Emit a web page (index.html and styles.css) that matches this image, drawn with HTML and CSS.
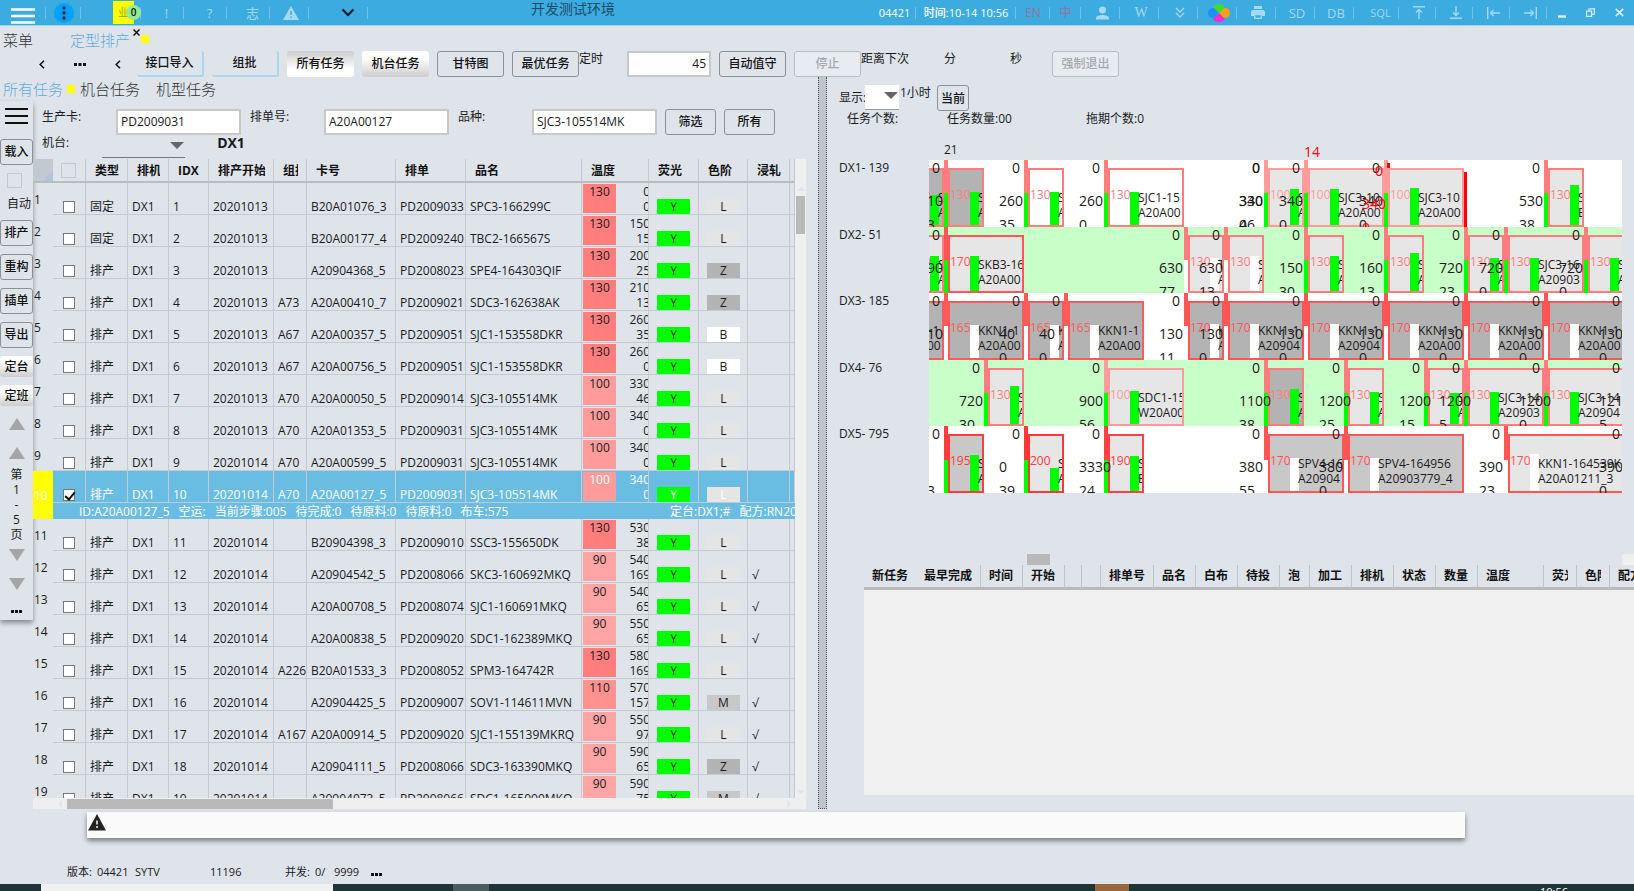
FILE: index.html
```html
<!DOCTYPE html>
<html lang="zh">
<head>
  <meta charset="utf-8">
  <meta name="viewport" content="width=device-width, initial-scale=1.0">
  <title>定型排产</title>
  <link rel="stylesheet" href="styles.css">
</head>
<body>
  <header class="topbar">
    <button class="top-item w-menu" aria-label="菜单"><svg width="24" height="18" viewBox="0 0 24 18"><path d="M0 2.5h24M0 9h24M0 15.5h24" stroke="#fff" stroke-width="2.4"/></svg></button>
    <button class="top-item w-dots" aria-label="更多"><span class="dots-circle"><svg width="20" height="20" viewBox="0 0 20 20"><g fill="#0b2a3c"><circle cx="10" cy="5" r="1.7"/><circle cx="10" cy="10" r="1.7"/><circle cx="10" cy="15" r="1.7"/></g></svg></span></button>
    <a class="top-item w-biz" href="#biz"><span class="biz">业<span class="badge">0</span></span></a>
    <button class="top-item w-43 faint shift">!</button>
    <button class="top-item w-43 faint shift">?</button>
    <button class="top-item w-43 faint shift">志</button>
    <button class="top-item w-39 faint" aria-label="警告"><svg width="16" height="14" viewBox="0 0 16 14"><path d="M8 0l8 14H0z" fill="currentColor"/><path d="M8 5v4M8 10.5v1.5" stroke="#3cabdf" stroke-width="1.5"/></svg></button>
    <button class="top-item w-59" aria-label="展开"><svg width="14" height="9" viewBox="0 0 14 9"><path d="M1.5 1.5L7 7l5.500-5.500" fill="none" stroke="#0b1c26" stroke-width="2.2"/></svg></button>
    <div class="top-title">开发测试环境</div>
    <span class="top-item w-43 white">04421</span>
    <span class="top-item w-100 white">时间:10-14 10:56</span>
    <button class="top-item w-34 lang">EN</button>
    <button class="top-item w-30 lang">中</button>
    <button class="top-item w-39 faint" aria-label="用户"><svg width="13" height="14" viewBox="0 0 13 14"><circle cx="6.500" cy="4" r="3.500" fill="currentColor"/><path d="M0 13.500v-2Q1 9 6.500 9T13 11.500v2z" fill="currentColor"/></svg></button>
    <button class="top-item w-39 faint serif">W</button>
    <button class="top-item w-39 faint" aria-label="收起"><svg width="10" height="12" viewBox="0 0 10 12"><path d="M1 1l4 4 4-4M1 6l4 4 4-4" fill="none" stroke="currentColor" stroke-width="1.400"/></svg></button>
    <button class="top-item w-39" aria-label="颜色"><svg width="22" height="18" viewBox="0 0 22 18"><ellipse cx="5" cy="9" rx="5" ry="5" fill="#1e90ff"/><ellipse cx="17" cy="9" rx="5" ry="5" fill="#f7a01c"/><path d="M11 9L5 3Q7 0 11 0t6 3z" fill="#3fdc2c"/><path d="M11 9l-6 6q2 3 6 3t6-3z" fill="#f32bd0"/></svg></button>
    <button class="top-item w-39 faint" aria-label="打印"><svg width="14" height="13" viewBox="0 0 14 13"><path d="M3 0h8v3H3zM1.500 4h11L14 5.500V10h-3V8H3v2H0V5.500z" fill="currentColor"/><path d="M3.700 8.500h6.600v3.800H3.700z" fill="none" stroke="currentColor" stroke-width="1.300"/></svg></button>
    <button class="top-item w-39 faint">SD</button>
    <button class="top-item w-39 faint">DB</button>
    <button class="top-item w-45 faint small">SQL</button>
    <button class="top-item w-37 faint" aria-label="置顶"><svg width="12" height="13" viewBox="0 0 12 13"><path d="M0 .7h12M6 13V3.500M3 6.500l3-3 3 3" fill="none" stroke="currentColor" stroke-width="1.400"/></svg></button>
    <button class="top-item w-37 faint" aria-label="置底"><svg width="12" height="13" viewBox="0 0 12 13"><path d="M0 12.300h12M6 0v9.500M3 6.500l3 3 3-3" fill="none" stroke="currentColor" stroke-width="1.400"/></svg></button>
    <button class="top-item w-37 faint" aria-label="靠左"><svg width="13" height="12" viewBox="0 0 13 12"><path d="M.7 0v12M13 6H3.500M6.500 3l-3 3 3 3" fill="none" stroke="currentColor" stroke-width="1.400"/></svg></button>
    <button class="top-item w-37 faint" aria-label="靠右"><svg width="13" height="12" viewBox="0 0 13 12"><path d="M12.300 0v12M0 6h9.500M6.500 3l3 3-3 3" fill="none" stroke="currentColor" stroke-width="1.400"/></svg></button>
    <button class="top-item win" aria-label="最小化"><svg width="8" height="10" viewBox="0 0 8 10"><path d="M0 8.500h8" stroke="#d8f1fd" stroke-width="2.500"/></svg></button>
    <button class="top-item win" aria-label="还原"><svg width="9" height="9" viewBox="0 0 9 9"><path d="M.6 3.100h5v5.300h-5zM3 3V.8h5.400v5.300H6" fill="none" stroke="#d8f1fd" stroke-width="1.200"/></svg></button>
    <button class="top-item win" aria-label="关闭"><svg width="9" height="9" viewBox="0 0 9 9"><path d="M.8.8l7.400 7.400M8.200.8L.8 8.200" stroke="#d8f1fd" stroke-width="1.800"/></svg></button>
  </header>

  <nav class="page-tabs">
    <a class="tab" href="#menu">菜单</a>
    <a class="tab active" href="#plan">定型排产</a>
    <button class="tab-close" aria-label="关闭标签"><svg width="7" height="7" viewBox="0 0 7 7"><path d="M.5.5l6 6M6.500.5l-6 6" stroke="#111" stroke-width="1.500"/></svg></button>
    <span class="dot"></span>
  </nav>

  <div class="toolbar">
    <button class="nav-btn" aria-label="上一页"><svg width="6" height="9" viewBox="0 0 6 9"><path d="M5 .8L1.200 4.500 5 8.200" fill="none" stroke="#111" stroke-width="1.500"/></svg></button>
    <button class="nav-btn" aria-label="更多"><svg width="12" height="3" viewBox="0 0 12 3"><path d="M0 0h3v3H0zM4.500 0h3v3h-3zM9 0h3v3H9z" fill="#111"/></svg></button>
    <button class="nav-btn" aria-label="上一个"><svg width="6" height="9" viewBox="0 0 6 9"><path d="M5 .8L1.200 4.500 5 8.200" fill="none" stroke="#111" stroke-width="1.500"/></svg></button>
    <div class="btn-group">
      <button class="btn blue-edge">接口导入</button>
      <button class="btn blue-edge">组批</button>
      <button class="btn pressed">所有任务</button>
      <button class="btn raised">机台任务</button>
      <button class="btn">甘特图</button>
      <button class="btn">最优任务</button>
    </div>
    <label class="timer-label" for="timer">定时</label>
    <div class="btn-group">
      <input class="text-box timer" id="timer" value="45">
      <button class="btn">自动值守</button>
      <button class="btn" disabled>停止</button>
    </div>
    <span class="next-label">距离下次</span>
    <span class="minute-label">分</span>
    <span class="second-label">秒</span>
    <button class="btn" disabled>强制退出</button>
  </div>

  <main class="workspace">
    <section class="left-pane">
      <nav class="sub-tabs">
        <a class="tab active" href="#all">所有任务</a>
        <span class="dot"></span>
        <a class="tab" href="#machine">机台任务</a>
        <a class="tab tab-last" href="#model">机型任务</a>
      </nav>
      <div class="left-body">
        <aside class="sidebar">
          <button class="side-menu" aria-label="菜单"><svg width="23" height="16" viewBox="0 0 23 16"><path d="M0 1h23M0 8h23M0 15h23" stroke="#111" stroke-width="2"/></svg></button>
          <button class="btn side-btn">载入</button>
          <label class="auto"><input type="checkbox" class="big-check">自动</label>
          <div class="side-group">
            <button class="btn side-btn">排产</button>
            <button class="btn side-btn">重构</button>
            <button class="btn side-btn">插单</button>
            <button class="btn side-btn">导出</button>
            <button class="btn side-btn flat raised">定台</button>
            <button class="btn side-btn flat raised">定班</button>
          </div>
          <button class="arrow up" aria-label="首页"></button>
          <button class="arrow up" aria-label="上一页"></button>
          <div class="pager"><span>第</span><span>1</span><span>-</span><span>5</span><span>页</span></div>
          <button class="arrow down" aria-label="下一页"></button>
          <button class="arrow down" aria-label="末页"></button>
          <button class="side-more" aria-label="更多"><svg width="11" height="3" viewBox="0 0 11 3"><path d="M0 0h3v3H0zM4 0h3v3H4zM8 0h3v3H8z" fill="#111"/></svg></button>
        </aside>
        <div class="list-area">
          <div class="filters">
            <label class="filter-label" for="card">生产卡:</label>
            <input class="text-box" id="card" value="PD2009031">
            <label class="filter-label" for="order">排单号:</label>
            <input class="text-box" id="order" value="A20A00127">
            <label class="filter-label" for="kind">品种:</label>
            <input class="text-box" id="kind" value="SJC3-105514MK">
            <button class="btn narrow">筛选</button>
            <button class="btn narrow">所有</button>
          </div>
          <div class="machine-row">
            <label for="machine">机台:</label>
            <span class="drop line"><select id="machine"><option></option></select></span>
            <b class="machine-name">DX1</b>
          </div>
          <div class="grid-box">
            <div class="grid-main">
              <div class="grid-clip">
                <table class="tasks">
                  <colgroup>
                    <col class="c-num"><col class="c-33"><col class="c-42"><col class="c-41"><col class="c-40"><col class="c-65"><col class="c-33"><col class="c-89"><col class="c-70"><col class="c-116"><col class="c-67"><col class="c-50"><col class="c-49"><col class="c-42"><col class="c-end">
                  </colgroup>
                  <thead>
                    <tr>
                      <th class="corner"></th>
                      <th class="check-cell"><input type="checkbox" class="big-check" aria-label="全选"></th>
                      <th><span>类型</span></th><th><span>排机</span></th><th><span>IDX</span></th><th><span>排产开始</span></th><th><span>组批</span></th><th><span>卡号</span></th><th><span>排单</span></th><th><span>品名</span></th><th><span>温度</span></th><th><span>荧光</span></th><th><span>色阶</span></th><th><span>浸轧</span></th><th></th>
                    </tr>
                  </thead>
                  <tbody id="tasks"></tbody>
                </table>
              </div>
              <div class="vscroll"><i class="v-up"></i><i class="v-thumb"></i><i class="v-down"></i></div>
            </div>
            <div class="hscroll"><i class="h-left"></i><i class="h-thumb"></i><i class="h-right"></i></div>
          </div>
        </div>
      </div>
    </section>

    <div class="splitter"></div>

    <section class="right-pane">
      <div class="show-row">
        <label for="span">显示:</label>
        <span class="drop white-drop"><select id="span"><option></option></select></span>
        <span class="hour">1小时</span>
        <button class="btn now">当前</button>
      </div>
      <div class="counts"><span>任务个数:</span><span>任务数量:00</span><span>拖期个数:0</span></div>
      <div class="gantt">
        <div class="gantt-head" id="hours"></div>
        <div class="gantt-labels"><span>DX1- 139</span><span>DX2- 51</span><span>DX3- 185</span><span>DX4- 76</span><span>DX5- 795</span></div>
        <div class="gantt-rows" id="gantt"></div>
      </div>
      <div class="gantt-scroll"><i class="h-left"></i><i class="g-thumb"></i><i class="h-right"></i><i class="g-corner"></i></div>
      <div class="new-tasks">
        <table class="queue">
          <colgroup>
            <col class="q-52"><col class="q-65"><col class="q-42"><col class="q-42"><col class="q-17"><col class="q-19"><col class="q-53"><col class="q-42"><col class="q-42"><col class="q-42"><col class="q-30"><col class="q-42"><col class="q-42"><col class="q-42"><col class="q-42"><col class="q-66"><col class="q-33"><col class="q-33"><col class="q-42">
          </colgroup>
          <thead>
            <tr>
              <th class="no-line"><span>新任务</span></th><th><span>最早完成</span></th><th><span>时间</span></th><th><span>开始</span></th><th></th><th></th><th><span>排单号</span></th><th><span>品名</span></th><th><span>白布</span></th><th><span>待投</span></th><th><span>泡</span></th><th><span>加工</span></th><th><span>排机</span></th><th><span>状态</span></th><th><span>数量</span></th><th><span>温度</span></th><th><span>荧光</span></th><th><span>色阶</span></th><th><span>配方</span></th>
            </tr>
          </thead>
        </table>
      </div>
    </section>
  </main>

  <div class="message-bar"><svg width="18" height="17" viewBox="0 0 18 17"><path d="M9 0l9 16.500H0z" fill="#222"/><path d="M9 6.500v4M9 12v2" stroke="#fafafa" stroke-width="1.500"/></svg></div>

  <footer class="status">
    <span class="s-ver">版本:</span><span class="s-no">04421</span><span class="s-user">SYTV</span><span class="s-port">11196</span><span class="s-par">并发:</span><span class="s-cur">0/</span><span class="s-max">9999</span>
    <svg width="11" height="3" viewBox="0 0 11 3"><path d="M0 0h3v3H0zM4 0h3v3H4zM8 0h3v3H8z" fill="#111"/></svg>
  </footer>
  <div class="taskbar"><i class="t-search"></i><i class="t-app"></i><i class="t-orange"></i><span class="t-clock">10:56</span></div>

  <script src="app.js"></script>
</body>
</html>
```
FILE: styles.css
```css
* { box-sizing: border-box; }

body {
  margin: 0;
  height: 100vh;
  overflow: hidden;
  display: flex;
  flex-direction: column;
  background: #dfe4eb;
  color: #1a1a1a;
  font: 12px/16px "Open Sans", "Noto Sans CJK SC", sans-serif;
}

button, input, select { font: inherit; color: inherit; }
button { padding: 0; border: 0; background: none; white-space: nowrap; }
a { color: inherit; text-decoration: none; }
i { display: block; }
svg { display: block; }

/* top bar */
.topbar {
  flex: none;
  height: 25px;
  display: flex;
  background: #3cabdf;
  box-shadow: 0 1px 0 #9fd4ee;
}
.top-item {
  flex: none;
  display: flex;
  align-items: center;
  justify-content: center;
  background: linear-gradient(#6fc1e8, #6fc1e8) right 7px / 1px 12px no-repeat;
  white-space: nowrap;
}
.top-item.win { background: none; width: 29px; }
.faint { color: #a5d9f2; font-size: 13px; }
.faint.small { font-size: 11px; }
.faint.serif { font-family: "Liberation Serif", serif; font-size: 14px; }
.white { color: #fff; font-size: 11px; font-weight: 500; }
.lang { color: #9a6f9c; }
.w-menu { width: 46px; padding-top: 6px; }
.w-dots { width: 35px; }
.w-biz { width: 60px; }
.w-43 { width: 43px; }
.w-39 { width: 39px; padding-left: 3px; }
.w-59 { width: 59px; padding-left: 18px; }
.w-100 { width: 100px; }
.w-34 { width: 34px; }
.w-30 { width: 31px; }
.w-45 { width: 45px; padding-left: 8px; }
.w-37 { width: 37px; padding-left: 3px; }
.shift { padding-left: 8px; }
.dots-circle { background: #00a2ff; border-radius: 50%; }
.biz {
  position: relative;
  width: 21px;
  height: 23px;
  margin-left: 32px;
  margin-right: 7px;
  padding-left: 5px;
  background: #ff0;
  color: #a0a800;
  font-size: 11px;
  line-height: 23px;
}
.badge {
  position: absolute;
  left: 13px;
  top: 4px;
  width: 15px;
  height: 15px;
  border-radius: 50%;
  background: #90ee90;
  color: #111;
  font-size: 10px;
  font-weight: 600;
  line-height: 15px;
  text-align: center;
}
.top-title {
  flex: 1;
  padding-left: 163px;
  font-size: 14px;
  line-height: 18px;
  color: #1c4d66;
}

/* tabs */
.page-tabs, .sub-tabs {
  flex: none;
  display: flex;
  align-items: center;
  padding-left: 3px;
}
.page-tabs { height: 26px; padding-top: 4px; }
.sub-tabs { height: 24px; }
.tab { font-size: 15px; line-height: 20px; font-weight: 300; color: #333; }
.tab.active { color: #5fabdc; }
.page-tabs .active { margin-left: 37px; }
.tab-close { align-self: flex-start; margin-left: 3px; }
.dot { width: 8px; height: 8px; background: #ff0; }
.page-tabs .dot { margin: 0 0 2px 1px; }
.sub-tabs .dot { margin: 0 5px 0 4px; }
.tab-last { margin-left: 16px; }

/* buttons and boxes */
.toolbar {
  flex: none;
  height: 26px;
  display: flex;
  align-items: flex-start;
  padding-left: 23px;
}
.nav-btn { width: 38px; height: 26px; display: flex; align-items: center; justify-content: center; }
.btn-group { display: flex; gap: 8px; }
.btn {
  width: 67px;
  height: 26px;
  border: 1px solid #8d9196;
  border-radius: 3px;
  color: #111;
  font-weight: 500;
  text-align: center;
}
.btn:disabled { background: #e8ecf0; border-color: #b9bdc2; color: #a5a8ac; }
.btn.blue-edge { border: 0; border-right: 2px solid #a9d6ea; border-bottom: 2px solid #a9d6ea; }
.btn.pressed { border: 0; background: linear-gradient(#cdcdcd, #fff 70%); }
.btn.raised { border: 0; background: linear-gradient(#fff, #fafafa 35%, #cdcdcd); }
.btn.narrow { width: 51px; margin-left: 8px; }
.text-box {
  width: 125px;
  height: 26px;
  padding: 0 3px 2px;
  border: 2px solid #c8c8c8;
  border-radius: 0;
  background: #fff;
  outline: 0;
}
.text-box.timer { width: 84px; text-align: right; }
.timer-label { width: 48px; }
.next-label { width: 83px; }
.minute-label { width: 66px; }
.second-label { width: 42px; }

.big-check, .row-check {
  appearance: none;
  margin: 0;
  width: 15px;
  height: 15px;
  border: 1px solid #c5c9ce;
  display: block;
}
.row-check { position: relative; width: 12px; height: 12px; border-color: #777; background: #fff; margin: 0 auto; }
.row-check:checked::after {
  content: "";
  position: absolute;
  left: 3px;
  top: 0;
  width: 4px;
  height: 8px;
  border: solid #111;
  border-width: 0 2px 2px 0;
  transform: rotate(40deg);
}

.drop { position: relative; display: block; }
.drop::after {
  content: "";
  position: absolute;
  right: 1px;
  top: 7px;
  border: 7px solid transparent;
  border-top-color: #666;
  border-bottom: 0;
  pointer-events: none;
}
.drop select { appearance: none; width: 100%; height: 100%; border: 0; background: none; display: block; }
.drop.line { width: 83px; height: 23px; margin-left: 33px; border-bottom: 1px solid #777; }
.white-drop { width: 34px; height: 25px; background: #fff; border-bottom: 1px solid #999; }

/* panes */
.workspace {
  flex: 1;
  min-height: 0;
  display: grid;
  grid-template-columns: minmax(0, 818fr) 9px minmax(0, 807fr);
}
.left-pane, .right-pane { min-height: 0; display: flex; flex-direction: column; }
.splitter {
  background: #c0c6c9;
  border: 1px dotted #555;
  border-top: 0;
}
.left-body { flex: 1; min-height: 0; display: flex; }

.sidebar {
  flex: none;
  width: 33px;
  align-self: flex-start;
  display: flex;
  flex-direction: column;
  align-items: center;
  padding: 7px 0;
  box-shadow: 0 3px 5px rgba(0, 0, 0, .4);
}
.side-menu { margin-bottom: 15px; }
.side-btn { width: 33px; }
.side-btn.flat { height: 21px; }
.auto { display: flex; flex-direction: column; gap: 8px; padding: 8px 0 8px 5px; }
.side-group { display: flex; flex-direction: column; gap: 8px; margin-bottom: 12px; }
.arrow { border: 8px solid transparent; width: 0; height: 0; }
.arrow.up { border-bottom: 12px solid #a5a5a5; border-top: 0; margin-bottom: 17px; }
.arrow.down { border-top: 12px solid #a5a5a5; border-bottom: 0; margin-top: 17px; }
.pager { display: flex; flex-direction: column; align-items: center; margin: -9px 0 -10px; line-height: 15px; }
.side-more { margin-top: 20px; }

.list-area { flex: 1; min-width: 0; display: flex; flex-direction: column; padding-right: 12px; }
.filters { flex: none; display: flex; padding: 8px 0 0 9px; }
.filter-label { width: 83px; }
.text-box + .filter-label { padding-left: 9px; }
.filters .filter-label:first-child { width: 74px; }
.machine-row { flex: none; height: 24px; display: flex; padding-left: 9px; }
.machine-name { margin-left: 32px; font-size: 14px; }

/* task list */
.grid-box { flex: 1; min-height: 0; display: flex; flex-direction: column; }
.grid-main { flex: 1; min-height: 0; display: flex; }
.grid-clip { flex: 1; min-width: 0; overflow: hidden; }
table { table-layout: fixed; border-spacing: 0; border-collapse: separate; width: 0; }
.tasks th, .tasks td { padding: 0; overflow: hidden; text-align: left; white-space: nowrap; border-right: 1px solid #c5cad2; }
.tasks thead th { height: 24px; padding: 1px 8px 0 9px; border-bottom: 2px solid #b9bbbd; color: #111; }
.tasks th > span, .queue th > span { display: block; overflow: hidden; }
.tasks thead .corner { background: linear-gradient(135deg, #c3c9d1 75%, #b4c3d6 75%); border-right: 0; }
.tasks thead .check-cell { padding: 0 0 0 8px; vertical-align: middle; }
.tasks td { height: 32px; padding: 0 0 0 4px; vertical-align: bottom; border-bottom: 1px solid #c5cad2; line-height: 14px; }
.tasks tbody th { font-weight: 400; padding: 2px 0 0 1px; border: 0; }
.tasks .check-cell { vertical-align: bottom; padding: 0 0 1px; }
.tasks .temp-cell { padding: 0 0 0 1px; }
.temp-wrap { display: flex; line-height: 15px; overflow: hidden; }
.temp { flex: none; width: 33px; height: 29px; text-align: center; }
.amounts { flex: none; width: 34px; height: 30px; text-align: right; }
.amounts span { display: block; }
.tasks td.tag-cell { padding: 0 0 0 8px; }
.tag { display: block; width: 33px; height: 15px; line-height: 15px; text-align: center; background: #e5e5e5; }
.tag.Y { background: #0f0; }
.tag.Z { background: #b3b3b3; }
.tag.M { background: #c8c8c8; }
.tag.B { background: #fff; }
.tasks .selected td { background: #69bde3; color: #fff; }
.tasks .selected th { background: #ff0; color: #fff; }
.tasks td.detail { height: 16px; padding-left: 26px; line-height: 15px; border: 0; }
.detail-wrap { display: flex; }
.detail-main { flex: none; width: 591px; display: flex; gap: 9px; }
.detail-more { display: flex; gap: 9px; }

.c-num { width: 20px; } .c-33 { width: 33px; } .c-42 { width: 42px; } .c-41 { width: 41px; }
.c-40 { width: 40px; } .c-65 { width: 65px; } .c-89 { width: 89px; } .c-70 { width: 70px; }
.c-116 { width: 116px; } .c-67 { width: 67px; } .c-50 { width: 50px; } .c-49 { width: 49px; } .c-end { width: 5px; }

/* scroll bars */
.vscroll { flex: none; width: 11px; background: #efefef; display: flex; flex-direction: column; align-items: center; padding-top: 28px; }
.v-up, .v-down { border: 4px solid transparent; }
.v-up { border-bottom-color: #dde6f0; border-top: 0; }
.v-down { border-top-color: #dde6f0; border-bottom: 0; margin-top: auto; margin-bottom: 4px; }
.v-thumb { width: 9px; height: 38px; margin-top: 5px; background: #b9b9b9; }
.hscroll { flex: none; height: 11px; background: #efefef; display: flex; align-items: center; padding-left: 25px; }
.h-left, .h-right { border: 4px solid transparent; }
.h-left { border-right-color: #dde6f0; border-left: 0; }
.h-right { border-left-color: #dde6f0; border-right: 0; margin-left: auto; margin-right: 15px; }
.h-thumb { width: 266px; height: 10px; margin-left: 5px; background: #b9b9b9; }

/* right side */
.show-row { flex: none; display: flex; padding: 8px 0 0 12px; height: 34px; line-height: 26px; white-space: nowrap; }
.show-row label { flex: none; width: 26px; }
.hour { width: 38px; line-height: 16px; padding-left: 1px; }
.btn.now { width: 32px; }
.counts { flex: none; display: flex; padding-left: 20px; line-height: 15px; }
.counts span:first-child { width: 100px; }
.counts span:nth-child(2) { width: 139px; }

.gantt {
  flex: none;
  display: grid;
  grid-template: 34px 333px / 90px minmax(0, 1fr);
  padding: 0 12px 0 12px;
}
.gantt-head { grid-column: 2; position: relative; }
.gantt-head span { position: absolute; bottom: 2px; }
.gantt-head span.current { color: #f00; font-size: 14px; bottom: 0; }
.gantt-labels, .gantt-rows { display: grid; grid-template-rows: repeat(5, 1fr); }
.lane { position: relative; overflow: hidden; background: #fff; }
.lane:nth-child(even) { background: #c8ffc8; }
.mark { position: absolute; top: 0; bottom: 0; width: 4px; background: #fff; }
.mark.g { background: #0f0; }
.mark i { height: 50%; }
.job {
  position: absolute;
  top: 8px;
  bottom: 0;
  overflow: hidden;
  border: 2px solid;
  background: #e6e6e6;
}
.job .deg { position: absolute; left: 0; top: 17px; }
.job .fill { position: absolute; left: 20px; bottom: 0; width: 9px; background: #fff; }
.job .fill.g { background: #0f0; }
.job .names { position: absolute; left: 28px; top: 20px; line-height: 15px; color: #1a1a1a; white-space: nowrap; }
.job .names span { display: block; }
.num { position: absolute; font-size: 14px; white-space: nowrap; }
.num.zero { top: 0; }
.num.mid { top: 33px; }
.num.low { top: 57px; }
.num.late { color: #f00; margin: 3px 0 0 3px; }
.late-mark { position: absolute; background: #f00; width: 3px; }

.gantt-scroll { flex: none; height: 11px; margin-top: 61px; display: flex; align-items: center; padding-left: 105px; }
.gantt-scroll .h-right { margin-right: 3px; }
.g-thumb { width: 23px; height: 11px; margin-left: 91px; background: #b9b9b9; }
.g-corner { width: 12px; height: 11px; background: #efefef; }
.new-tasks { flex: 1; min-height: 0; margin: 0 0 14px 37px; background: linear-gradient(#dfe4eb, #dfe4eb) top / 100% 22px no-repeat #f0f0f0; border-bottom: 0; overflow: hidden; }
.queue th { height: 25px; padding: 0 8px; border-bottom: 3px solid #b9b9b9; border-right: 1px solid #c0c4c9; text-align: left; white-space: nowrap; color: #111; }
.queue th.no-line { border-right: 0; }
.q-52 { width: 52px; } .q-65 { width: 65px; } .q-42 { width: 42px; } .q-17 { width: 17px; }
.q-19 { width: 19px; } .q-53 { width: 53px; } .q-30 { width: 30px; } .q-66 { width: 66px; } .q-33 { width: 33px; }

/* bottom */
.message-bar {
  flex: none;
  height: 26px;
  margin: 3px 169px 0 87px;
  padding: 2px 1px;
  background: #fafafa;
  box-shadow: 0 3px 5px rgba(0, 0, 0, .45);
}
.status { flex: none; height: 46px; display: flex; align-items: flex-end; padding: 0 0 4px 67px; font-size: 11px; }
.status svg { margin-bottom: 4px; }
.s-ver { width: 30px; } .s-no { width: 38px; } .s-user { width: 75px; } .s-port { width: 75px; }
.s-par { width: 30px; } .s-cur { width: 19px; } .s-max { width: 37px; }
.taskbar { flex: none; height: 7px; display: flex; overflow: hidden; background: #1f3438; padding-left: 41px; }
.t-search { width: 292px; background: #f0f0f0; }
.t-app { width: 36px; margin-left: 120px; background: #4b5e5f; }
.t-orange { width: 34px; margin-left: 606px; background: #97683d; }
.t-clock { margin: 0 66px 0 auto; color: #fff; font-size: 11px; }
```
FILE: app.js
```js
// type, start, group, card, order, name, temp, amount, rest, shade, pad
var tasks = [
  ["固定", "20201013", "", "B20A01076_3", "PD2009033", "SPC3-166299C", 130, 0, 0, "L", ""],
  ["固定", "20201013", "", "B20A00177_4", "PD2009240", "TBC2-166567S", 130, 150, 15, "L", ""],
  ["排产", "20201013", "", "A20904368_5", "PD2008023", "SPE4-164303QIF", 130, 200, 25, "Z", ""],
  ["排产", "20201013", "A73", "A20A00410_7", "PD2009021", "SDC3-162638AK", 130, 210, 13, "Z", ""],
  ["排产", "20201013", "A67", "A20A00357_5", "PD2009051", "SJC1-153558DKR", 130, 260, 35, "B", ""],
  ["排产", "20201013", "A67", "A20A00756_5", "PD2009051", "SJC1-153558DKR", 130, 260, 0, "B", ""],
  ["排产", "20201013", "A70", "A20A00050_5", "PD2009014", "SJC3-105514MK", 100, 330, 46, "L", ""],
  ["排产", "20201013", "A70", "A20A01353_5", "PD2009031", "SJC3-105514MK", 100, 340, 0, "L", ""],
  ["排产", "20201014", "A70", "A20A00599_5", "PD2009031", "SJC3-105514MK", 100, 340, 0, "L", ""],
  ["排产", "20201014", "A70", "A20A00127_5", "PD2009031", "SJC3-105514MK", 100, 340, 0, "L", ""],
  ["排产", "20201014", "", "B20904398_3", "PD2009010", "SSC3-155650DK", 130, 530, 38, "L", ""],
  ["排产", "20201014", "", "A20904542_5", "PD2008066", "SKC3-160692MKQ", 90, 540, 169, "L", "√"],
  ["排产", "20201014", "", "A20A00708_5", "PD2008074", "SJC1-160691MKQ", 90, 540, 65, "L", "√"],
  ["排产", "20201014", "", "A20A00838_5", "PD2009020", "SDC1-162389MKQ", 90, 550, 65, "L", "√"],
  ["排产", "20201014", "A226", "B20A01533_3", "PD2008052", "SPM3-164742R", 130, 580, 169, "L", ""],
  ["排产", "20201014", "", "A20904425_5", "PD2009007", "SOV1-114611MVN", 110, 570, 157, "M", "√"],
  ["排产", "20201014", "A167", "A20A00914_5", "PD2009020", "SJC1-155139MKRQ", 90, 550, 97, "L", "√"],
  ["排产", "20201014", "", "A20904111_5", "PD2008066", "SDC3-163390MKQ", 90, 590, 65, "Z", "√"],
  ["排产", "20201014", "", "A20904073_5", "PD2008066", "SDC1-165000MKQ", 90, 590, 75, "M", "√"]
];
var selected = 10;

// hotter is redder
function heat(t) {
  return "rgb(255," + (255 - t) + "," + (255 - t) + ")";
}

function taskRow(t, n) {
  var on = n === selected;
  var html = '<tr' + (on ? ' class="selected"' : '') + '>' +
    '<th scope="row"' + (on ? ' rowspan="2"' : '') + '>' + n + '</th>' +
    '<td class="check-cell"><input type="checkbox" class="row-check" aria-label="选择' + n + '"' + (on ? ' checked' : '') + '></td>' +
    '<td>' + t[0] + '</td><td>DX1</td><td>' + n + '</td>';
  for (var i = 1; i < 6; i++) {
    html += '<td>' + t[i] + '</td>';
  }
  html += '<td class="temp-cell"><div class="temp-wrap"><span class="temp" style="background:' + heat(t[6]) + '">' + t[6] + '</span>' +
    '<div class="amounts"><span>' + t[7] + '</span><span>' + t[8] + '</span></div></div></td>' +
    '<td class="tag-cell"><span class="tag Y">Y</span></td>' +
    '<td class="tag-cell"><span class="tag ' + t[9] + '">' + t[9] + '</span></td>' +
    '<td>' + t[10] + '</td><td></td></tr>';
  if (on) {
    html += '<tr class="selected"><td class="detail" colspan="14"><div class="detail-wrap">' +
      '<div class="detail-main"><span>ID:A20A00127_5</span><span>空运:</span><span>当前步骤:005</span><span>待完成:0</span><span>待原料:0</span><span>待原料:0</span><span>布车:575</span></div>' +
      '<div class="detail-more"><span>定台:DX1;#</span><span>配方:RN20</span></div></div></td></tr>';
  }
  return html;
}

document.getElementById("tasks").innerHTML = tasks.map(function (t, i) {
  return taskRow(t, i + 1);
}).join("");

// slot, length, temp, background, fill colour (g = green, w = white), fill height, name, card
var lanes = [
  {
    jobs: [
      [-1, 1, 130, "#b3b3b3", "g", 30, "S", "A"],
      [0, 1, 130, "#b3b3b3", "g", 33, "S", "A"],
      [2, 1, 130, "#fff", "g", 33, "S", "A"],
      [4, 2, 130, "#fff", "g", 33, "SJC1-15", "A20A00"],
      [8, 1, 100, "#e6e6e6", "g", 36, "S", "A"],
      [9, 2, 100, "#e6e6e6", "g", 36, "SJC3-10", "A20A00"],
      [11, 2, 100, "#e6e6e6", "g", 37, "SJC3-10", "A20A00"],
      [15, 1, 130, "#e6e6e6", "g", 40, "S", "B"]
    ],
    nums: [[0, 210, 13], [2, 260, 35], [4, 260, 0], [8, 330, 46], [8, 340, 0], [9, 340, 0], [11, 340, 0], [15, 530, 38]],
    late: 11
  },
  {
    jobs: [
      [-1, 1, 130, "#e6e6e6", "g", 35, "S", "A"],
      [0, 2, 170, "#e6e6e6", "g", 35, "SKB3-16", "A20A00"],
      [6, 1, 130, "#e6e6e6", "w", 33, "T", "A"],
      [7, 1, 130, "#e6e6e6", "w", 35, "S", "A"],
      [9, 1, 130, "#e6e6e6", "g", 35, "S", "A"],
      [11, 1, 130, "#e6e6e6", "g", 38, "S", "A"],
      [13, 1, 130, "#e6e6e6", "g", 33, "S", "A"],
      [14, 2, 130, "#e6e6e6", "g", 33, "SJC3-16", "A20903"],
      [16, 2, 130, "#e6e6e6", "g", 33, "SJC3-16", "A20903"]
    ],
    nums: [[0, 190, ""], [6, 630, 77], [7, 630, 13], [9, 150, 30], [11, 160, 13], [13, 720, 23], [14, 720, 0], [16, 720, 0]]
  },
  {
    jobs: [
      [-2, 2, 165, "#b3b3b3", "w", 34, "KKN1-1", "A20A00"],
      [0, 2, 165, "#b3b3b3", "w", 33, "KKN1-1", "A20A00"],
      [2, 1, 165, "#b3b3b3", "w", 33, "K", "A"],
      [3, 2, 165, "#b3b3b3", "w", 33, "KKN1-1", "A20A00"],
      [6, 1, 170, "#b3b3b3", "w", 34, "K", "A"],
      [7, 2, 170, "#b3b3b3", "w", 34, "KKN1-1", "A20904"],
      [9, 2, 170, "#b3b3b3", "w", 34, "KKN1-1", "A20904"],
      [11, 2, 170, "#b3b3b3", "w", 34, "KKN1-1", "A20A00"],
      [13, 2, 170, "#b3b3b3", "w", 34, "KKN1-1", "A20A00"],
      [15, 2, 170, "#b3b3b3", "w", 34, "KKN1-1", "A20A00"]
    ],
    nums: [[0, 110, ""], [2, 40, 0], [3, 40, 0], [6, 130, 11], [7, 130, 0], [9, 130, 0], [11, 130, 0], [13, 130, 0], [15, 130, 0], [17, 130, 0]]
  },
  {
    jobs: [
      [1, 1, 130, "#e6e6e6", "g", 38, "S", "A"],
      [4, 2, 100, "#e6e6e6", "g", 33, "SDC1-15", "W20A00"],
      [8, 1, 130, "#b3b3b3", "g", 35, "S", "A"],
      [10, 1, 130, "#e6e6e6", "g", 32, "S", "A"],
      [12, 1, 130, "#e6e6e6", "g", 31, "S", "A"],
      [13, 2, 130, "#e6e6e6", "g", 32, "SJC3-14", "A20903"],
      [15, 2, 130, "#e6e6e6", "g", 32, "SJC3-14", "A20904"]
    ],
    nums: [[1, 720, 30], [4, 900, 56], [8, 1100, 38], [10, 1200, 25], [12, 1200, 15], [13, 1200, 5], [15, 1200, 0], [17, 1210, 5]]
  },
  {
    jobs: [
      [0, 1, 195, "#c8c8c8", "g", 36, "S", "A"],
      [2, 1, 200, "#e6e6e6", "g", 23, "S", "A"],
      [4, 1, 190, "#e6e6e6", "g", 35, "S", "B"],
      [8, 2, 170, "#c8c8c8", "w", 33, "SPV4-16", "A20904"],
      [10, 3, 170, "#c8c8c8", "w", 33, "SPV4-164956", "A20903779_4"],
      [14, 3, 170, "#e6e6e6", "w", 37, "KKN1-164539K", "A20A01211_3"]
    ],
    nums: [[0, "", 13], [2, 0, 39], [4, 3330, 24], [8, 380, 55], [10, 380, 0], [14, 390, 23], [17, 390, 0]]
  }
];

var step = 40;
var first = 15;

function slotX(k) {
  return first + k * step;
}

function laneHtml(lane) {
  var html = "";
  lane.jobs.forEach(function (j) {
    var x = slotX(j[0]);
    html += '<div class="mark ' + j[4] + '" style="left:' + x + 'px"><i style="background:' + heat(j[2]) + '"></i></div>' +
      '<div class="job" style="left:' + (x + 4) + 'px;width:' + (j[1] * step - 4) + 'px;color:' + heat(j[2]) + ';background:' + j[3] + '">' +
      '<span class="deg">' + j[2] + '</span><i class="fill ' + j[4] + '" style="height:' + j[5] + 'px"></i>' +
      '<div class="names"><span>' + j[6] + '</span><span>' + j[7] + '</span></div></div>';
  });
  lane.nums.forEach(function (n) {
    var x = slotX(n[0]);
    html += '<span class="num zero" style="left:' + (x - 12) + 'px">0</span>' +
      '<span class="num mid" style="left:' + (x - 25) + 'px">' + n[1] + '</span>' +
      '<span class="num low" style="left:' + (x - 25) + 'px">' + n[2] + '</span>';
  });
  if (lane.late) {
    var lx = slotX(lane.late);
    html += '<span class="num zero late" style="left:' + (lx - 12) + 'px">0</span>' +
      '<span class="num mid late" style="left:' + (lx - 25) + 'px">340</span>' +
      '<span class="num low late" style="left:' + (lx - 25) + 'px">0</span>' +
      '<i class="late-mark" style="left:' + (lx + 3) + 'px;top:3px;height:5px"></i>' +
      '<i class="late-mark" style="left:' + (lx + 80) + 'px;top:12px;height:55px"></i>';
  }
  return '<div class="lane">' + html + '</div>';
}

document.getElementById("gantt").innerHTML = lanes.map(laneHtml).join("");
document.getElementById("hours").innerHTML =
  '<span style="left:' + slotX(0) + 'px">21</span>' +
  '<span class="current" style="left:' + slotX(9) + 'px">14</span>';
```
